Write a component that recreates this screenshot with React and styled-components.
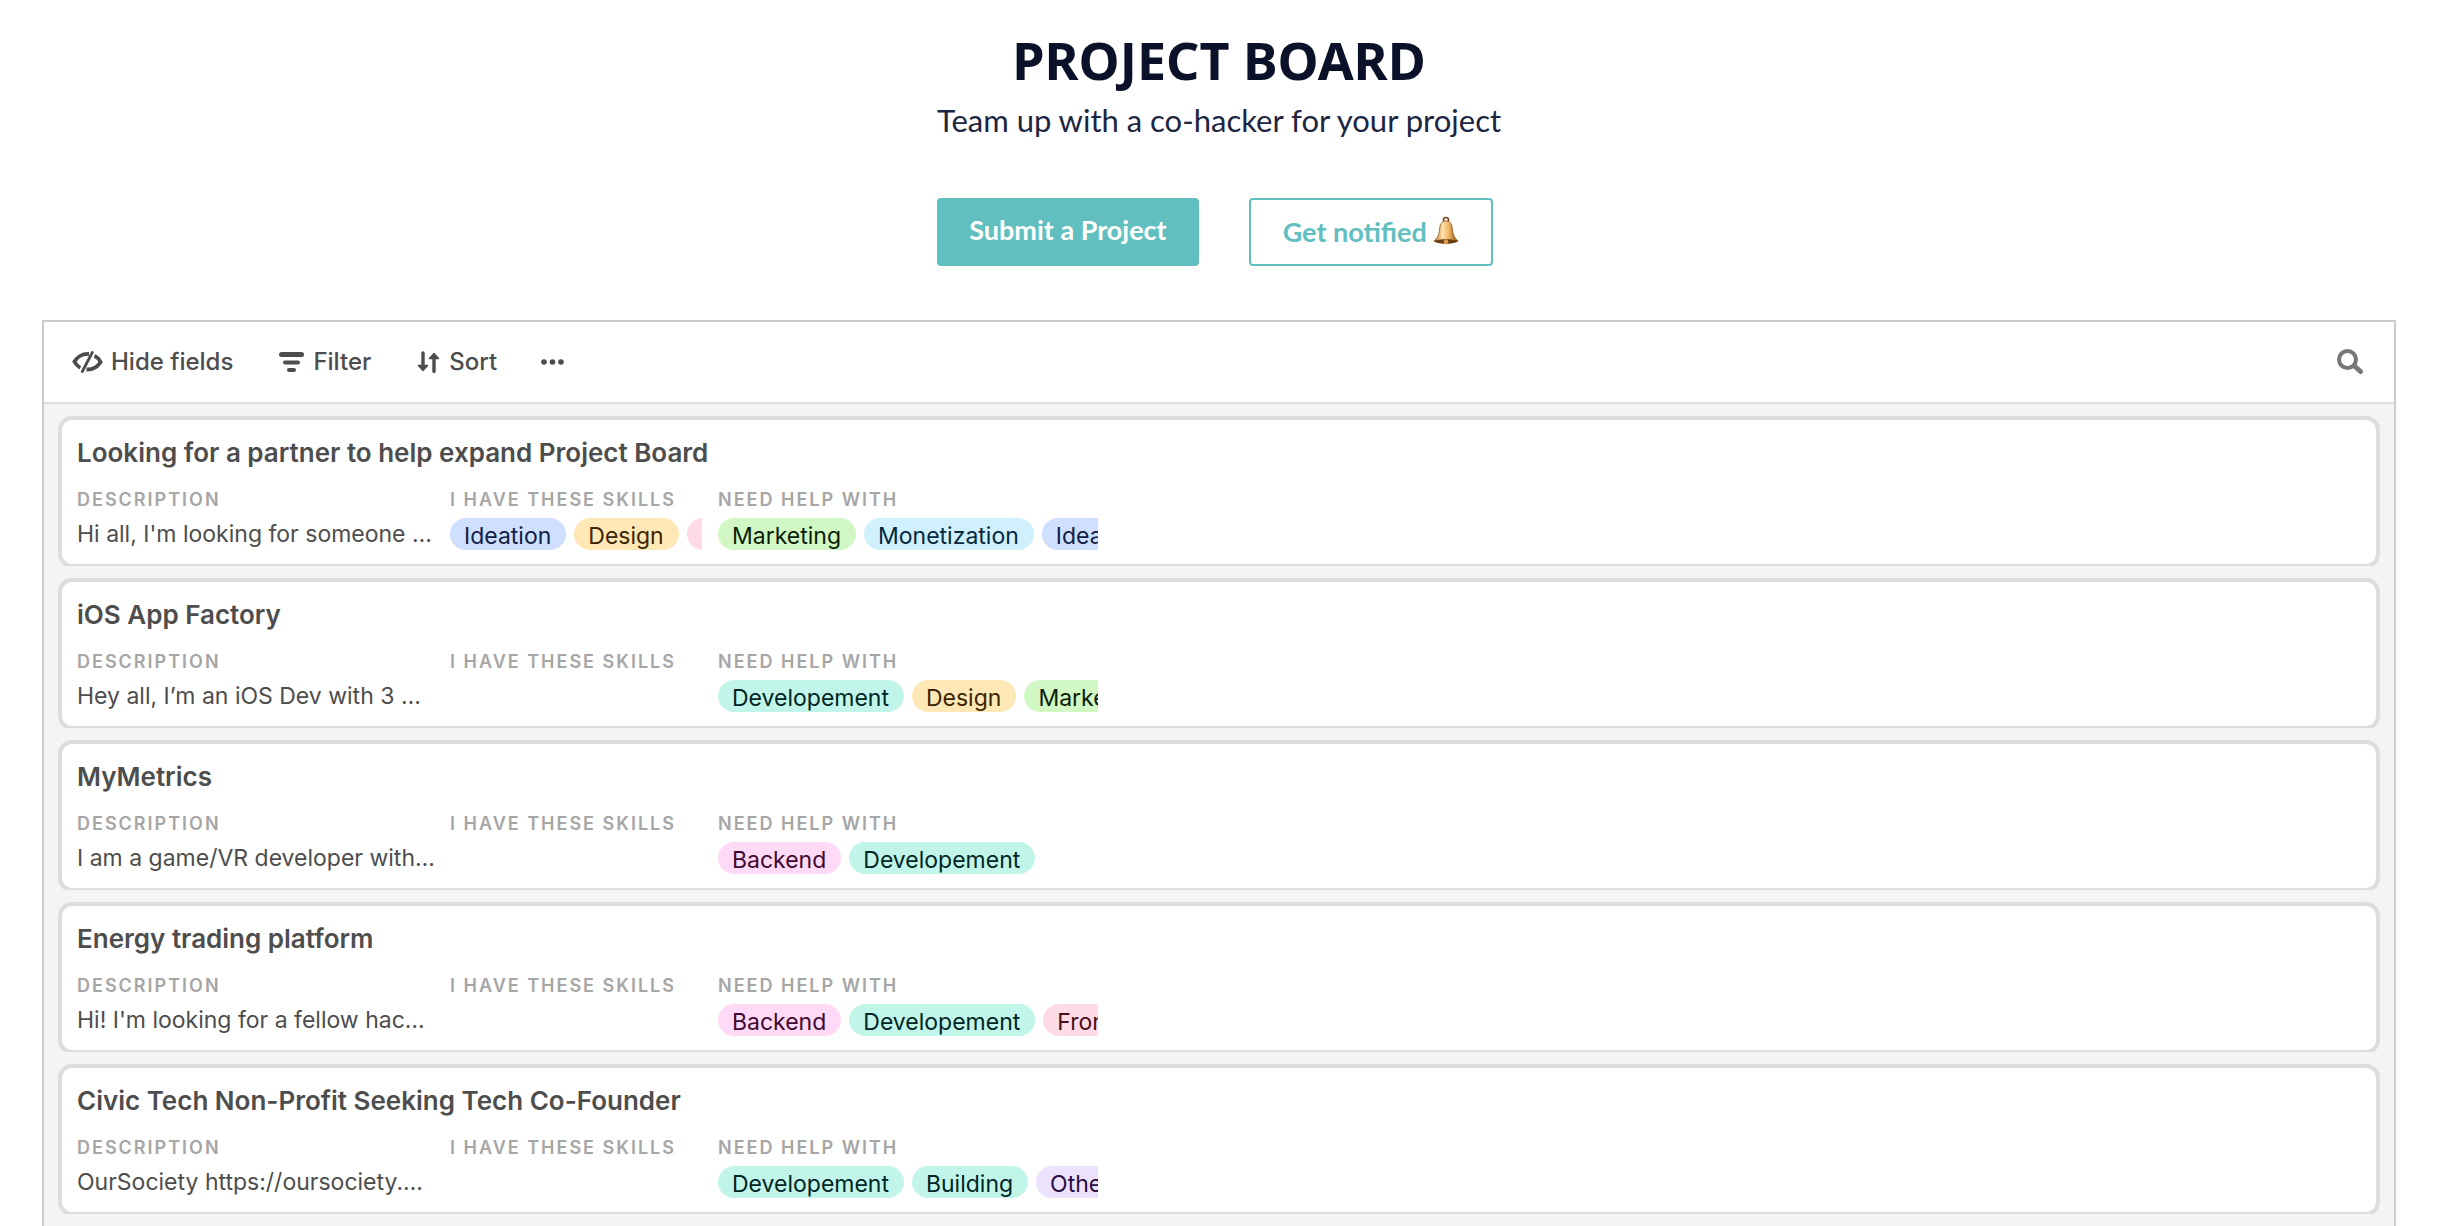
import React from "react";
import styled, { createGlobalStyle } from "styled-components";

const GlobalStyle = createGlobalStyle`
  * {
    box-sizing: border-box;
  }
  body {
    margin: 0;
    background: #fff;
    overflow: hidden;
  }
`;

const Page = styled.main`
  padding: 28px 48px 0 42px;
`;

const Header = styled.header`
  display: flex;
  flex-direction: column;
  align-items: center;
  color: #0a1128;

  h1 {
    margin: 0;
    font: 700 52px/64px "Noto Sans", "Open Sans", sans-serif;
  }
  p {
    margin: 8px 0 0;
    color: #1c2541;
    font: 400 31px/40px Lato, sans-serif;
  }
`;

const Actions = styled.div`
  display: flex;
  justify-content: center;
  gap: 50px;
  margin: 58px 0 54px;
  padding-right: 8px;
`;

const Action = styled.a`
  display: flex;
  align-items: center;
  justify-content: center;
  gap: 6px;
  height: 68px;
  padding: ${(props) => (props.$outline ? "0 32px" : "0 30px 4px")};
  border: 2px solid #61c0bf;
  border-radius: 4px;
  background: ${(props) => (props.$outline ? "#fff" : "#61c0bf")};
  color: ${(props) => (props.$outline ? "#61c0bf" : "#fff")};
  font: 700 27px/36px Lato, sans-serif;
  text-decoration: none;
`;

const Board = styled.section`
  border: 2px solid #ccc;
  background: #f4f4f4;
  font-family: Inter, "Liberation Sans", sans-serif;
  color: #4d4d4d;
`;

const Toolbar = styled.div`
  display: flex;
  align-items: center;
  height: 82px;
  padding: 0 30px 0 28px;
  border-bottom: 2px solid #ddd;
  background: #fff;
`;

const ToolButton = styled.button`
  display: flex;
  align-items: center;
  gap: 8px;
  margin: 0 ${(props) => props.$space || 0}px 0 0;
  padding: 0;
  border: 0;
  background: none;
  color: ${(props) => props.$color || "#4d4d4d"};
  font: 500 24px/32px Inter, sans-serif;

  &:last-child {
    margin-left: auto;
  }
`;

const List = styled.div`
  display: flex;
  flex-direction: column;
  gap: 12px;
  padding: 12px 14px;
`;

const CardClip = styled.div`
  overflow: hidden;
  padding: 4px 4px 2px;
`;

const Card = styled.article`
  height: 144px;
  padding: 16px 15px;
  border-radius: 10px;
  background: #fff;
  box-shadow: 0 0 0 4px #ddd;

  h2 {
    margin: 0 0 18px;
    font-size: 26px;
    line-height: 34px;
    font-weight: 600;
  }
`;

const Fields = styled.div`
  display: grid;
  grid-template-columns: 357px 252px 380px;
  gap: 16px;
`;

const Field = styled.div`
  overflow: hidden;
  white-space: nowrap;

  h3 {
    margin: 0 0 6px;
    color: #a6a6a6;
    font-size: 18px;
    line-height: 24px;
    font-weight: 600;
    letter-spacing: 2px;
    text-transform: uppercase;
  }
  p {
    margin: 0;
    font-size: 23px;
    line-height: 32px;
  }
`;

const Tags = styled.div`
  display: flex;
  gap: 8px;
`;

const colors = {
  blue: ["#cfdfff", "#102046"],
  yellow: ["#ffe8b6", "#3b2501"],
  red: ["#ffdce5", "#4c0c1c"],
  green: ["#d1f7c4", "#0b1d05"],
  cyan: ["#d0f0fd", "#04283f"],
  teal: ["#c2f5e9", "#012524"],
  pink: ["#ffdaf6", "#400832"],
  purple: ["#ede2fe", "#280b42"],
};

const Tag = styled.span`
  flex: none;
  height: 32px;
  padding: 0 15px 0 14px;
  border-radius: 16px;
  background: ${(props) => colors[props.$color][0]};
  color: ${(props) => colors[props.$color][1]};
  font-size: 23px;
  line-height: 36px;
`;

const tagColors = {
  Ideation: "blue",
  Design: "yellow",
  Frontend: "red",
  Marketing: "green",
  Monetization: "cyan",
  Developement: "teal",
  Backend: "pink",
  Building: "teal",
  Other: "purple",
};

const projects = [
  {
    title: "Looking for a partner to help expand Project Board",
    description: "Hi all, I'm looking for someone …",
    skills: ["Ideation", "Design", "Frontend"],
    needs: ["Marketing", "Monetization", "Ideation"],
  },
  {
    title: "iOS App Factory",
    description: "Hey all, I’m an iOS Dev with 3 …",
    skills: [],
    needs: ["Developement", "Design", "Marketing"],
  },
  {
    title: "MyMetrics",
    description: "I am a game/VR developer with…",
    skills: [],
    needs: ["Backend", "Developement"],
  },
  {
    title: "Energy trading platform",
    description: "Hi! I'm looking for a fellow hac…",
    skills: [],
    needs: ["Backend", "Developement", "Frontend"],
  },
  {
    title: "Civic Tech Non-Profit Seeking Tech Co-Founder",
    description: "OurSociety https://oursociety.…",
    skills: [],
    needs: ["Developement", "Building", "Other"],
  },
];

const BellIcon = () => (
  <svg width="26" height="32" viewBox="0 2 26 32" aria-hidden="true">
    <defs>
      <linearGradient id="brass">
        <stop offset="0" stopColor="#b8701f" />
        <stop offset="0.35" stopColor="#ffe3ae" />
        <stop offset="0.6" stopColor="#f3b868" />
        <stop offset="1" stopColor="#8f4f12" />
      </linearGradient>
    </defs>
    <circle cx="13" cy="6" r="2.5" fill="none" stroke="#7a4a1c" strokeWidth="1.6" />
    <path d="M13 7C8 7 7 11 6.500 16C6 21 4.500 24 1 27C6 30 20 30 25 27C21.500 24 20 21 19.500 16C19 11 18 7 13 7Z" fill="url(#brass)" stroke="#8a5520" strokeWidth="0.8" />
    <path d="M1 27C6 24.500 20 24.500 25 27C20 30.500 6 30.500 1 27Z" fill="#6b3d12" />
    <circle cx="13" cy="28" r="2.4" fill="#d99a4c" />
  </svg>
);

const HideIcon = () => (
  <svg width="31" height="22" viewBox="0 0 31 22" fill="none" stroke="currentColor" strokeWidth="3.8" aria-hidden="true">
    <path d="M17 3C10 2.500 4.800 6.500 2.400 10.500C3.800 13.300 5.500 15.300 8.300 16.800" />
    <path d="M22.500 4.800C25.500 6.300 27.300 8.300 28.600 11C26 15.300 21 18.800 14.500 18.500" />
    <path d="M20.300 1.500L10.300 20.500" strokeWidth="2.8" strokeLinecap="round" />
  </svg>
);

const FilterIcon = () => (
  <svg width="26" height="22" viewBox="0 0 26 22" fill="currentColor" aria-hidden="true">
    <rect x="0" y="1" width="25" height="5" rx="2.5" />
    <rect x="4" y="9.5" width="17" height="4" rx="2" />
    <rect x="8" y="17" width="9" height="4" rx="2" />
  </svg>
);

const SortIcon = () => (
  <svg width="24" height="24" viewBox="0 0 24 24" fill="none" stroke="currentColor" strokeWidth="3.4" strokeLinecap="round" aria-hidden="true">
    <path d="M6 3V18M17 21.500V7" />
    <path d="M1.500 15.500L6 20.500L10.500 15.500ZM12.500 8.500L17 3.500L21.500 8.500Z" fill="currentColor" strokeWidth="1.5" strokeLinejoin="round" />
  </svg>
);

const MoreIcon = () => (
  <svg width="24" height="8" viewBox="0 0 24 8" fill="currentColor" aria-hidden="true">
    <circle cx="3" cy="4" r="2.8" />
    <circle cx="11.5" cy="4" r="2.8" />
    <circle cx="20" cy="4" r="2.8" />
  </svg>
);

const SearchIcon = () => (
  <svg width="27" height="26" viewBox="0 0 27 26" fill="none" stroke="currentColor" aria-hidden="true">
    <circle cx="10.5" cy="10.5" r="8.5" strokeWidth="4" />
    <path d="M17.500 17L23.500 22.500" strokeWidth="5" strokeLinecap="round" />
  </svg>
);

const TagList = ({ names }) => (
  <Tags>
    {names.map((name) => (
      <Tag key={name} $color={tagColors[name]}>
        {name}
      </Tag>
    ))}
  </Tags>
);

const App = () => {
  return (
    <Page>
      <GlobalStyle />
      <Header>
        <h1>PROJECT BOARD</h1>
        <p>Team up with a co-hacker for your project</p>
      </Header>
      <Actions>
        <Action href="#submit">Submit a Project</Action>
        <Action href="#notify" $outline>
          Get notified
          <BellIcon />
        </Action>
      </Actions>
      <Board>
        <Toolbar>
          <ToolButton type="button" $space={46}>
            <HideIcon />
            Hide fields
          </ToolButton>
          <ToolButton type="button" $space={46}>
            <FilterIcon />
            Filter
          </ToolButton>
          <ToolButton type="button" $space={44}>
            <SortIcon />
            Sort
          </ToolButton>
          <ToolButton type="button" aria-label="More">
            <MoreIcon />
          </ToolButton>
          <ToolButton type="button" $color="#777" aria-label="Search">
            <SearchIcon />
          </ToolButton>
        </Toolbar>
        <List>
          {projects.map((project) => (
            <CardClip key={project.title}>
              <Card>
                <h2>{project.title}</h2>
                <Fields>
                  <Field>
                    <h3>Description</h3>
                    <p>{project.description}</p>
                  </Field>
                  <Field>
                    <h3>I have these skills</h3>
                    <TagList names={project.skills} />
                  </Field>
                  <Field>
                    <h3>Need help with</h3>
                    <TagList names={project.needs} />
                  </Field>
                </Fields>
              </Card>
            </CardClip>
          ))}
        </List>
      </Board>
    </Page>
  );
};

export default App;
